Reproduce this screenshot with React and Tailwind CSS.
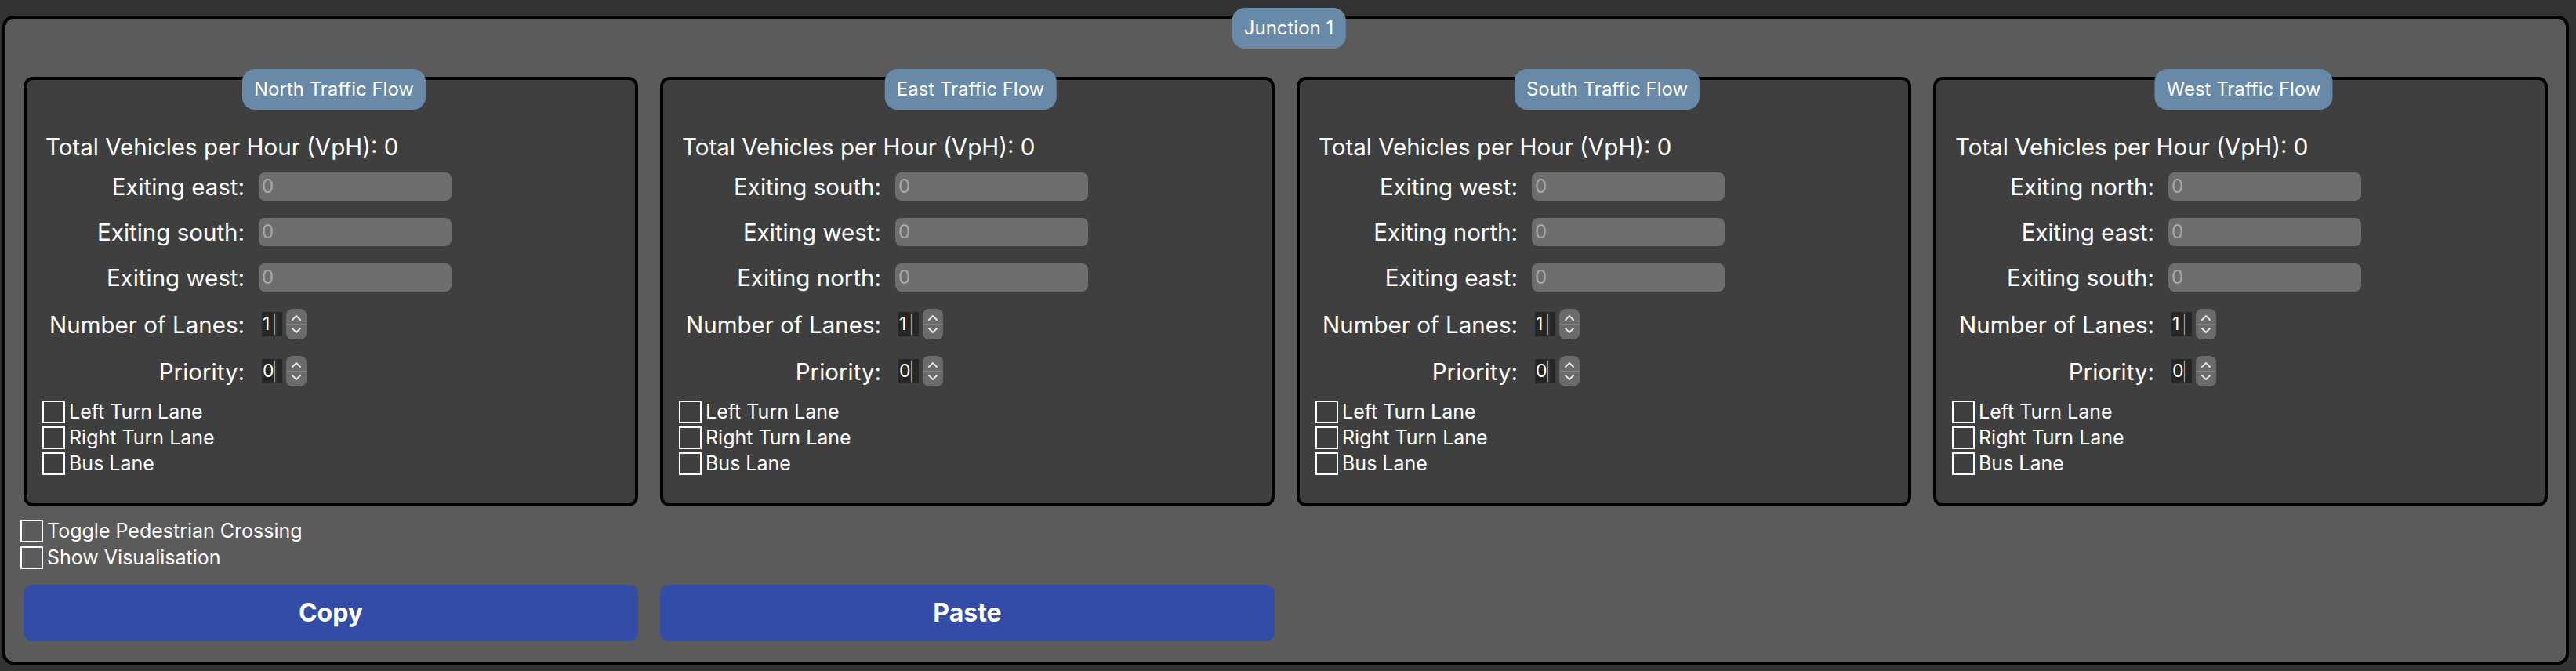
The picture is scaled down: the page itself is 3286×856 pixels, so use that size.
import React from 'react';

const flows = [
  { name: 'North', exits: ['east', 'south', 'west'] },
  { name: 'East', exits: ['south', 'west', 'north'] },
  { name: 'South', exits: ['west', 'north', 'east'] },
  { name: 'West', exits: ['north', 'east', 'south'] },
];

const Badge = ({ children }) => (
  <div className="absolute top-[-14px] left-[calc(50%+4px)] -translate-x-1/2 h-[52px] px-[15px] flex items-center rounded-[16px] bg-[#6889a8] text-white text-[24px] whitespace-nowrap">
    {children}
  </div>
);

const Checkbox = ({ label }) => (
  <label className="flex items-center gap-[5px] h-[29px] text-white text-[25px] leading-none">
    <span className="w-[29px] h-[29px] border-2 border-white" />
    <span>{label}</span>
  </label>
);

const Stepper = () => (
  <div className="w-[26px] h-[39px] rounded-[8px] bg-[#6b6b6b] flex flex-col items-center justify-center">
    <svg width="26" height="39" viewBox="0 0 26 39">
      <path d="M8 14 L13 9 L18 14" fill="none" stroke="#e5e5e5" strokeWidth="2" strokeLinecap="round" strokeLinejoin="round" />
      <line x1="1" y1="19.5" x2="25" y2="19.5" stroke="#858585" strokeWidth="1" />
      <path d="M8 25 L13 30 L18 25" fill="none" stroke="#e5e5e5" strokeWidth="2" strokeLinecap="round" strokeLinejoin="round" />
    </svg>
  </div>
);

const NumberField = ({ label, value }) => (
  <div className="flex items-center h-[39px]">
    <span className="w-[254px] text-right text-white text-[29.5px] leading-[34px] whitespace-nowrap">{label}</span>
    <div className="ml-[22px] flex items-center gap-[5px]">
      <div className="relative w-[26px] h-[31px] bg-[#262626] text-white text-[23px] leading-[31px] pl-[1px]">
        <span className="relative z-10">{value}</span>
        <span className="absolute left-[15px] top-0 h-full w-[4px] bg-[#333]" />
        <span className="absolute left-[16px] top-[2px] h-[27px] w-[1px] bg-[#9a9a9a]" />
      </div>
      <Stepper />
    </div>
  </div>
);

const FlowPanel = ({ flow }) => (
  <div className="relative border-4 border-black rounded-[12px] bg-[#3f3f3f] pt-[68px] pb-[36px]">
    <Badge>{flow.name} Traffic Flow</Badge>
    <div className="pl-[24px] text-white text-[29.5px] leading-[34px] whitespace-nowrap">
      Total Vehicles per Hour (VpH): 0
    </div>
    <div className="mt-[16px] flex flex-col gap-[22px]">
      {flow.exits.map((dir) => (
        <div key={dir} className="flex items-center h-[36px] pl-[24px]">
          <span className="w-[254px] text-right text-white text-[29.5px] leading-[34px] whitespace-nowrap">Exiting {dir}:</span>
          <div className="ml-[18px] w-[246px] h-[36px] rounded-[8px] bg-[#6e6e6e] pl-[4px] text-[24px] leading-[36px] text-[#a8a8a8]">
            0
          </div>
        </div>
      ))}
    </div>
    <div className="mt-[22px] pl-[24px] flex flex-col gap-[21px]">
      <NumberField label="Number of Lanes:" value="1" />
      <NumberField label="Priority:" value="0" />
    </div>
    <div className="mt-[18px] pl-[20px] flex flex-col gap-[4px]">
      <Checkbox label="Left Turn Lane" />
      <Checkbox label="Right Turn Lane" />
      <Checkbox label="Bus Lane" />
    </div>
  </div>
);

export default function App() {
  return (
    <div className="h-[856px] bg-[#333333] pt-[20px] pl-[3px] font-[Inter,sans-serif]">
      <div className="relative w-[3274px] h-[828px] border-4 border-black rounded-[14px] bg-[#5b5b5b] pt-[74px] px-[23px]">
        <Badge>Junction 1</Badge>
        <div className="grid grid-cols-4 gap-[28px]">
          {flows.map((f) => (
            <FlowPanel key={f.name} flow={f} />
          ))}
        </div>
        <div className="mt-[17px] -ml-[4px] flex flex-col gap-[5px]">
          <Checkbox label="Toggle Pedestrian Crossing" />
          <Checkbox label="Show Visualisation" />
        </div>
        <div className="mt-[20px] grid grid-cols-4 gap-[28px]">
          <button className="h-[72px] rounded-[12px] bg-[#334da7] text-white text-[32px] font-bold">Copy</button>
          <button className="h-[72px] rounded-[12px] bg-[#334da7] text-white text-[32px] font-bold">Paste</button>
        </div>
      </div>
    </div>
  );
}
